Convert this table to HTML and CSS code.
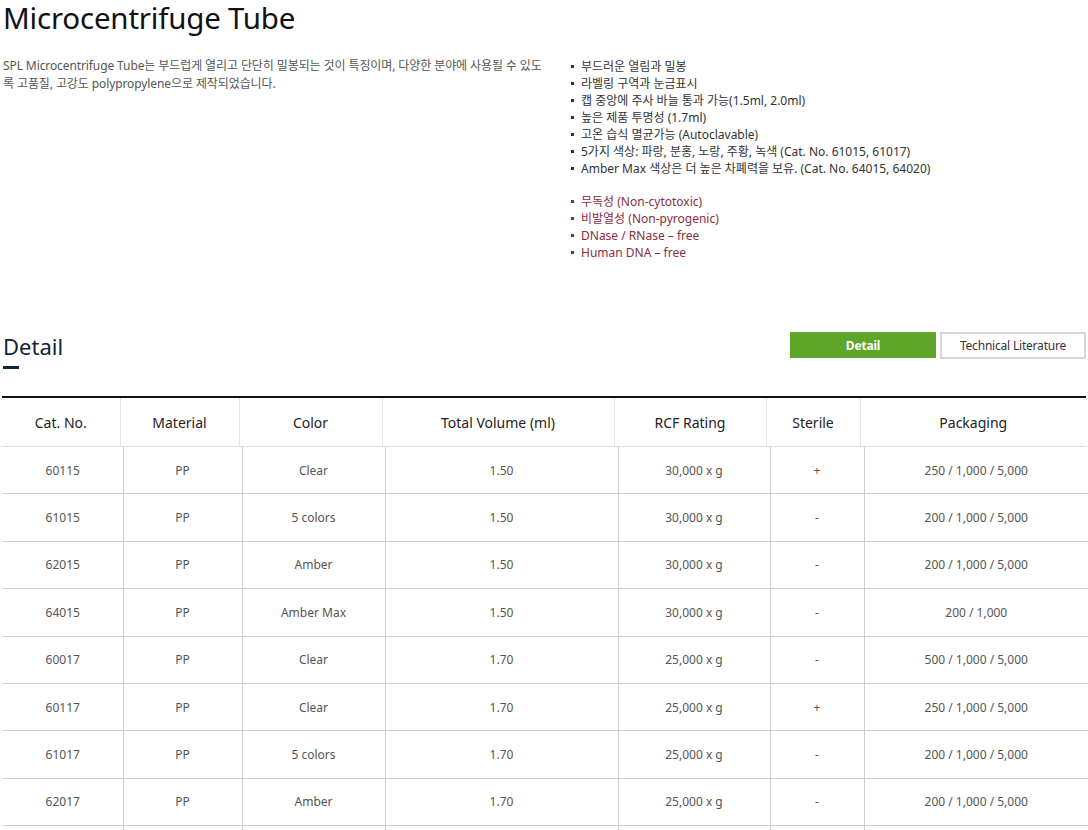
FILE: index.html
```html
<!DOCTYPE html>
<html lang="ko">
<head>
<meta charset="utf-8">
<title>Microcentrifuge Tube</title>
<link rel="stylesheet" href="styles.css">
</head>
<body>
<div class="page">
  <h1 class="title">Microcentrifuge Tube</h1>
  <div class="intro">
    <p class="desc">SPL Microcentrifuge Tube는 부드럽게 열리고 단단히 밀봉되는 것이 특징이며, 다양한 분야에 사용될 수 있도록 고품질, 고강도 polypropylene으로 제작되었습니다.</p>
    <div class="features">
      <ul class="list">
        <li>부드러운 열림과 밀봉</li>
        <li>라벨링 구역과 눈금표시</li>
        <li>캡 중앙에 주사 바늘 통과 가능(1.5ml, 2.0ml)</li>
        <li>높은 제품 투명성 (1.7ml)</li>
        <li>고온 습식 멸균가능 (Autoclavable)</li>
        <li>5가지 색상: 파랑, 분홍, 노랑, 주황, 녹색 (Cat. No. 61015, 61017)</li>
        <li>Amber Max 색상은 더 높은 차폐력을 보유. (Cat. No. 64015, 64020)</li>
      </ul>
      <ul class="list red">
        <li>무독성 (Non-cytotoxic)</li>
        <li>비발열성 (Non-pyrogenic)</li>
        <li>DNase / RNase – free</li>
        <li>Human DNA – free</li>
      </ul>
    </div>
  </div>

  <div class="detail-head">
    <h2 class="detail-title">Detail</h2>
    <div class="tabs">
      <span class="tab active">Detail</span>
      <span class="tab">Technical Literature</span>
    </div>
  </div>

  <table class="thead">
    <colgroup>
      <col class="c1"><col class="c2"><col class="c3"><col class="c4"><col class="c5"><col class="c6"><col class="c7">
    </colgroup>
    <tr>
      <th>Cat. No.</th><th>Material</th><th>Color</th><th>Total Volume (ml)</th><th>RCF Rating</th><th>Sterile</th><th>Packaging</th>
    </tr>
  </table>
  <table class="tbody">
    <colgroup>
      <col class="b1"><col class="b2"><col class="b3"><col class="b4"><col class="b5"><col class="b6"><col class="b7">
    </colgroup>
    <tr><td>60115</td><td>PP</td><td>Clear</td><td>1.50</td><td>30,000 x g</td><td>+</td><td>250 / 1,000 / 5,000</td></tr>
    <tr><td>61015</td><td>PP</td><td>5 colors</td><td>1.50</td><td>30,000 x g</td><td>-</td><td>200 / 1,000 / 5,000</td></tr>
    <tr><td>62015</td><td>PP</td><td>Amber</td><td>1.50</td><td>30,000 x g</td><td>-</td><td>200 / 1,000 / 5,000</td></tr>
    <tr><td>64015</td><td>PP</td><td>Amber Max</td><td>1.50</td><td>30,000 x g</td><td>-</td><td>200 / 1,000</td></tr>
    <tr><td>60017</td><td>PP</td><td>Clear</td><td>1.70</td><td>25,000 x g</td><td>-</td><td>500 / 1,000 / 5,000</td></tr>
    <tr><td>60117</td><td>PP</td><td>Clear</td><td>1.70</td><td>25,000 x g</td><td>+</td><td>250 / 1,000 / 5,000</td></tr>
    <tr><td>61017</td><td>PP</td><td>5 colors</td><td>1.70</td><td>25,000 x g</td><td>-</td><td>200 / 1,000 / 5,000</td></tr>
    <tr><td>62017</td><td>PP</td><td>Amber</td><td>1.70</td><td>25,000 x g</td><td>-</td><td>200 / 1,000 / 5,000</td></tr>
    <tr><td>63017</td><td>PP</td><td>Clear</td><td>1.70</td><td>25,000 x g</td><td>-</td><td>200 / 1,000 / 5,000</td></tr>
  </table>
</div>
</body>
</html>
```

FILE: styles.css
```css
html, body {
  margin: 0;
  padding: 0;
  background: #fff;
}
body {
  font-family: "Noto Sans", "Noto Sans CJK KR", sans-serif;
  color: #333;
  overflow: hidden;
}
.page {
  width: 1088px;
  height: 830px;
  overflow: hidden;
}
.title {
  margin: 0;
  padding: 0 0 0 3px;
  font-size: 29.5px;
  font-weight: 400;
  line-height: 36px;
  color: #111;
  letter-spacing: -0.2px;
}
.intro {
  display: flex;
  gap: 23px;
  margin-top: 21px;
  padding-left: 3px;
  height: 275px;
}
.desc {
  margin: 0;
  width: 544px;
  font-size: 12px;
  line-height: 18px;
  color: #555;
  letter-spacing: -0.1px;
}
.features {
  display: flex;
  flex-direction: column;
  gap: 16px;
  padding-top: 1px;
}
.list {
  list-style: none;
  margin: 0;
  padding: 0;
  font-size: 12px;
  line-height: 17px;
  color: #333;
  letter-spacing: 0;
}
.list li {
  position: relative;
  padding-left: 11px;
}
.list li::before {
  content: "";
  position: absolute;
  left: 1px;
  top: 7px;
  width: 3px;
  height: 3px;
  background: #333;
}
.list.red li {
  color: #8a2e3f;
}
.list.red li::before {
  background: #8a2e3f;
}
.detail-head {
  display: flex;
  justify-content: space-between;
  align-items: flex-start;
  height: 64px;
  padding-left: 3px;
}
.detail-title {
  margin: 0;
  font-size: 22px;
  font-weight: 400;
  line-height: 28px;
  color: #10233a;
  position: relative;
  padding-bottom: 9px;
}
.detail-title::after {
  content: "";
  position: absolute;
  left: 0;
  bottom: 0;
  width: 16px;
  height: 3px;
  background: #10233a;
}
.tabs {
  display: flex;
  gap: 4px;
  padding-right: 2px;
}
.tab {
  box-sizing: border-box;
  width: 146px;
  height: 27px;
  border: 2px solid #d6d6d6;
  font-size: 12px;
  line-height: 23px;
  text-align: center;
  color: #333;
  letter-spacing: -0.2px;
}
.tab.active {
  background: #5da629;
  border-color: #5da629;
  color: #fff;
  font-weight: 700;
  height: 26px;
}
table {
  border-collapse: collapse;
  table-layout: fixed;
}
.thead {
  width: 1084px;
  margin-left: 2px;
  border-top: 2px solid #111;
}
.thead th {
  height: 48px;
  padding: 0;
  font-size: 14px;
  font-weight: 400;
  color: #222;
  text-align: center;
  border-left: 1px solid #e3e3e3;
  border-bottom: 1px solid #dcdcdc;
}
.thead th:first-child {
  border-left: none;
}
.c1 { width: 118px; }
.c2 { width: 119px; }
.c3 { width: 143px; }
.c4 { width: 232px; }
.c5 { width: 152px; }
.c6 { width: 94px; }
.c7 { width: 226px; }
.tbody {
  width: 1085px;
  margin-left: 3px;
}
.b1 { width: 120px; }
.b2 { width: 119px; }
.b3 { width: 143px; }
.b4 { width: 233px; }
.b5 { width: 152px; }
.b6 { width: 94px; }
.b7 { width: 224px; }
.tbody td {
  height: 46.4px;
  padding: 0;
  font-size: 12px;
  color: #555;
  text-align: center;
  border-left: 1px solid #cfcfcf;
  border-bottom: 1px solid #cfcfcf;
}
.tbody td:first-child {
  border-left: none;
}
```
